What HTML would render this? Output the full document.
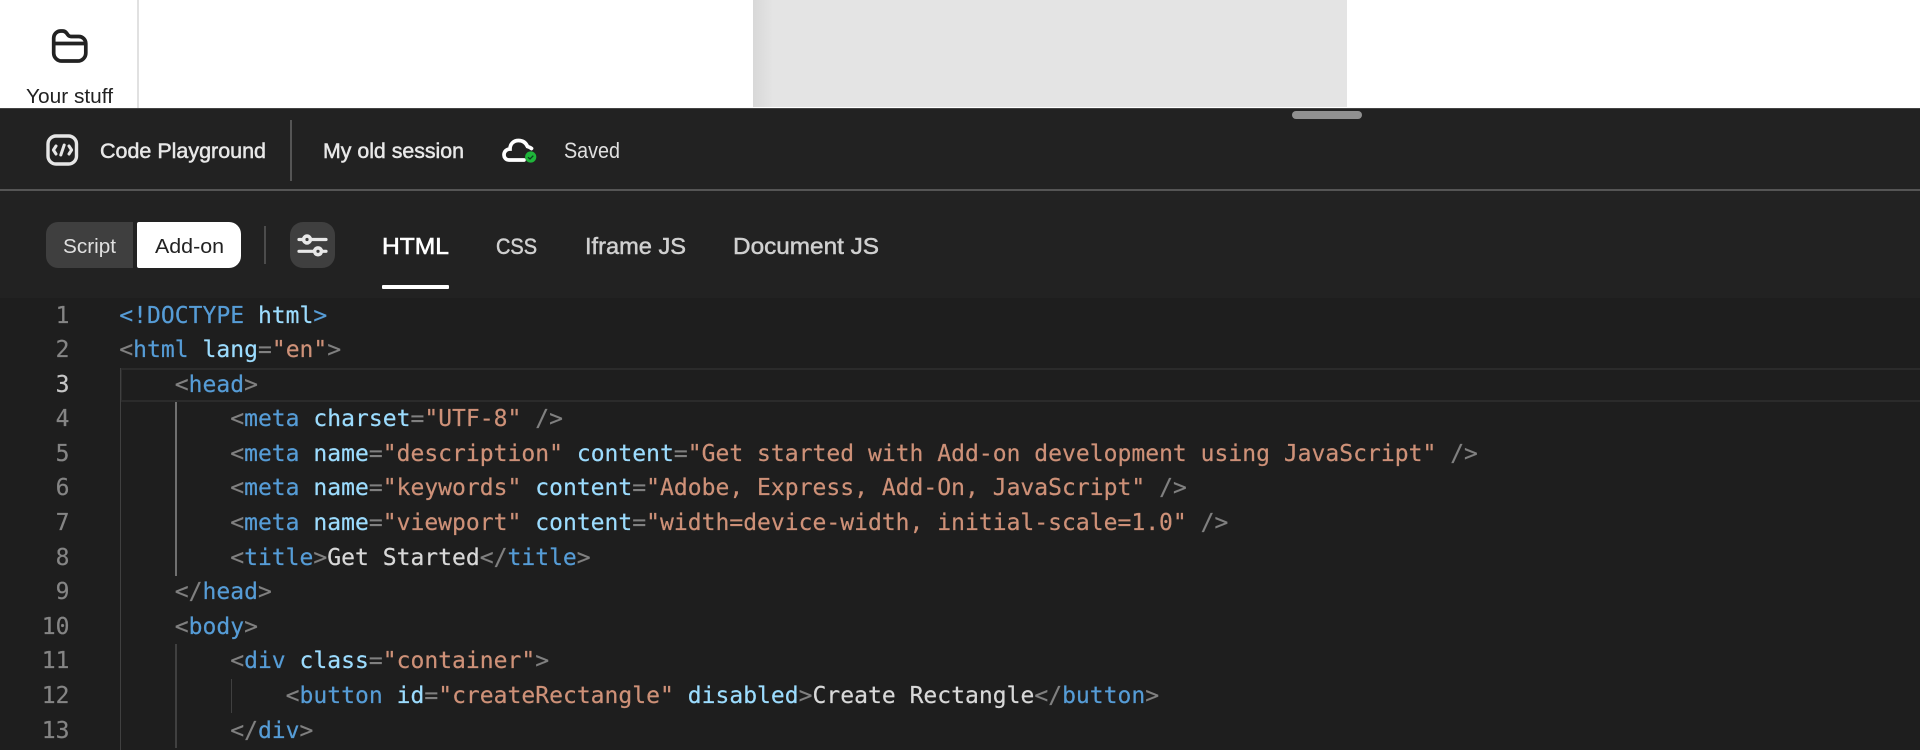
<!DOCTYPE html>
<html lang="en"><head><meta charset="utf-8"><title>Code Playground</title>
<style>
html,body{margin:0;padding:0;background:#fff;width:1920px;height:750px;overflow:hidden}
#root{position:relative;width:1920px;height:750px;overflow:hidden}
.abs{position:absolute}
#code{position:absolute;left:119.3px;top:298.5px;font:23px/34.6px "DejaVu Sans Mono","Liberation Mono",monospace;letter-spacing:.015px;white-space:pre;color:#d8d8d8;-webkit-text-stroke:.2px}
#nums{position:absolute;left:0;width:69.5px;top:298.5px;font:23px/34.6px "DejaVu Sans Mono","Liberation Mono",monospace;text-align:right;color:#858585;white-space:pre;-webkit-text-stroke:.2px}
#nums b{font-weight:normal;color:#c6c6c6}
i{font-style:normal}
.p{color:#808080}.t{color:#569cd6}.a{color:#9cdcfe}.s{color:#ce9178}
svg text{font-family:"Liberation Sans",sans-serif}
</style></head><body><div id="root">
<div class="abs" style="left:753px;top:0;width:594px;height:107px;background:linear-gradient(90deg,#d8d8d8,#e4e4e4 20px)"></div>
<div class="abs" style="left:137px;top:0;width:1.5px;height:108px;background:#e1e1e1"></div>
<div class="abs" style="left:0;top:108px;width:1920px;height:190px;background:#222;border-top:1px solid #444;box-sizing:border-box"></div>
<div class="abs" style="left:0;top:298px;width:1920px;height:452px;background:#1e1e1e"></div>
<div class="abs" style="left:1292px;top:111px;width:70px;height:8px;border-radius:4px;background:#909090"></div>
<div class="abs" style="left:0;top:189px;width:1920px;height:2px;background:#555"></div>
<div class="abs" style="left:290px;top:120px;width:1.5px;height:61px;background:#555"></div>
<div class="abs" style="left:46px;top:222px;width:87px;height:46px;background:#3f3f3f;border-radius:12px 0 0 12px"></div>
<div class="abs" style="left:137px;top:222px;width:104px;height:46px;background:#fff;border-radius:2px 12px 12px 2px"></div>
<div class="abs" style="left:264px;top:226px;width:2px;height:38px;background:#4c4c4c"></div>
<div class="abs" style="left:290px;top:222px;width:45px;height:46px;background:#3f3f3f;border-radius:13px"></div>
<div class="abs" style="left:382px;top:285px;width:67px;height:4px;background:#fff;border-radius:1px"></div>
<div class="abs" style="left:120px;top:368px;width:1800px;height:34px;box-sizing:border-box;border:2px solid #2b2b2b;border-right:0"></div>
<div class="abs" style="left:119.5px;top:368px;width:1.5px;height:382px;background:#404040"></div>
<div class="abs" style="left:175px;top:402px;width:1.5px;height:174px;background:#707070"></div>
<div class="abs" style="left:175px;top:644px;width:1.5px;height:104px;background:#404040"></div>
<div class="abs" style="left:230.5px;top:679px;width:1.5px;height:34px;background:#404040"></div>
<svg class="abs" style="left:0;top:0" width="1920" height="300" viewBox="0 0 1920 300">
<path d="M53.7 38a7 7 0 0 1 7-7h1.8c2 0 3 .7 4 2l1.5 2c.8 1 1.6 1.5 3 1.5h7.8a7 7 0 0 1 7 7V53a8 8 0 0 1-8 8H61.7a8 8 0 0 1-8-8Z M53.7 43.5H85.5" fill="none" stroke="#222" stroke-width="3.7"/>
<text x="26" y="103" font-size="20.5" fill="#222" textLength="87" lengthAdjust="spacingAndGlyphs">Your stuff</text>
<rect x="48" y="136" width="28.5" height="28" rx="8" fill="none" stroke="#e6e6e6" stroke-width="3.4"/>
<path d="M56 146l-2.6 4 2.6 4M69 146l2.6 4-2.6 4M60.8 155l3.4-10" fill="none" stroke="#e6e6e6" stroke-width="3" stroke-linecap="round" stroke-linejoin="round"/>
<text x="100" y="158" font-size="21.5" fill="#e8e8e8" stroke="#e8e8e8" stroke-width=".5" textLength="166" lengthAdjust="spacingAndGlyphs">Code Playground</text>
<text x="323" y="158" font-size="21.5" fill="#e8e8e8" stroke="#e8e8e8" stroke-width=".5" textLength="141" lengthAdjust="spacingAndGlyphs">My old session</text>
<path d="M524 160H509C505.5 160 504 157 504 155C504 151.5 506.5 149 510 149C510 143.5 514 140.5 518.5 140.5C523 140.5 526 143 527.5 146.5C529 147 530.5 147.7 531.5 148.5" fill="none" stroke="#fff" stroke-width="3.7" stroke-linecap="round"/>
<circle cx="530.7" cy="157" r="5.6" fill="#1fb53a"/>
<path d="M528 157.3l2 1.7 3.3-3.3" fill="none" stroke="#0c4020" stroke-width="1.3"/>
<text x="564" y="158" font-size="22" fill="#e0e0e0" textLength="56" lengthAdjust="spacingAndGlyphs">Saved</text>
<text x="63" y="253" font-size="20.5" fill="#e0e0e0" textLength="53" lengthAdjust="spacingAndGlyphs">Script</text>
<text x="155" y="253" font-size="20.5" fill="#222" textLength="69" lengthAdjust="spacingAndGlyphs">Add-on</text>
<path d="M299 239.5H326M299 251.3H326" stroke="#e8e8e8" stroke-width="3.2" stroke-linecap="round"/>
<circle cx="307" cy="239.5" r="3.4" fill="#3f3f3f" stroke="#e8e8e8" stroke-width="3.6"/>
<circle cx="318" cy="251.3" r="3.4" fill="#3f3f3f" stroke="#e8e8e8" stroke-width="3.6"/>
<text x="382" y="254" font-size="23.5" fill="#fff" stroke="#fff" stroke-width=".6" textLength="67" lengthAdjust="spacingAndGlyphs">HTML</text>
<text x="496" y="254" font-size="22" fill="#d0d0d0" stroke="#d0d0d0" stroke-width=".5" textLength="41" lengthAdjust="spacingAndGlyphs">CSS</text>
<text x="585" y="254" font-size="23.5" fill="#d0d0d0" stroke="#d0d0d0" stroke-width=".5" textLength="101" lengthAdjust="spacingAndGlyphs">Iframe JS</text>
<text x="733" y="254" font-size="23.5" fill="#d0d0d0" stroke="#d0d0d0" stroke-width=".5" textLength="146" lengthAdjust="spacingAndGlyphs">Document JS</text>
</svg>
<div id="nums">1
2
<b>3</b>
4
5
6
7
8
9
10
11
12
13</div>
<div id="code"><i class="t">&lt;!DOCTYPE</i> <i class="a">html</i><i class="t">&gt;</i>
<i class="p">&lt;</i><i class="t">html</i> <i class="a">lang</i><i class="p">=</i><i class="s">"en"</i><i class="p">&gt;</i>
    <i class="p">&lt;</i><i class="t">head</i><i class="p">&gt;</i>
        <i class="p">&lt;</i><i class="t">meta</i> <i class="a">charset</i><i class="p">=</i><i class="s">"UTF-8"</i> <i class="p">/&gt;</i>
        <i class="p">&lt;</i><i class="t">meta</i> <i class="a">name</i><i class="p">=</i><i class="s">"description"</i> <i class="a">content</i><i class="p">=</i><i class="s">"Get started with Add-on development using JavaScript"</i> <i class="p">/&gt;</i>
        <i class="p">&lt;</i><i class="t">meta</i> <i class="a">name</i><i class="p">=</i><i class="s">"keywords"</i> <i class="a">content</i><i class="p">=</i><i class="s">"Adobe, Express, Add-On, JavaScript"</i> <i class="p">/&gt;</i>
        <i class="p">&lt;</i><i class="t">meta</i> <i class="a">name</i><i class="p">=</i><i class="s">"viewport"</i> <i class="a">content</i><i class="p">=</i><i class="s">"width=device-width, initial-scale=1.0"</i> <i class="p">/&gt;</i>
        <i class="p">&lt;</i><i class="t">title</i><i class="p">&gt;</i>Get Started<i class="p">&lt;/</i><i class="t">title</i><i class="p">&gt;</i>
    <i class="p">&lt;/</i><i class="t">head</i><i class="p">&gt;</i>
    <i class="p">&lt;</i><i class="t">body</i><i class="p">&gt;</i>
        <i class="p">&lt;</i><i class="t">div</i> <i class="a">class</i><i class="p">=</i><i class="s">"container"</i><i class="p">&gt;</i>
            <i class="p">&lt;</i><i class="t">button</i> <i class="a">id</i><i class="p">=</i><i class="s">"createRectangle"</i> <i class="a">disabled</i><i class="p">&gt;</i>Create Rectangle<i class="p">&lt;/</i><i class="t">button</i><i class="p">&gt;</i>
        <i class="p">&lt;/</i><i class="t">div</i><i class="p">&gt;</i></div>
</div></body></html>
